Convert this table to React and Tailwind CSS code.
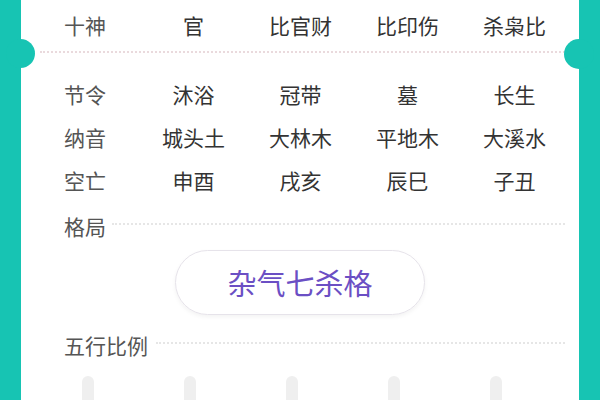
import React from 'react';

const rows = [
  ['节令', '沐浴', '冠带', '墓', '长生'],
  ['纳音', '城头土', '大林木', '平地木', '大溪水'],
  ['空亡', '申酉', '戌亥', '辰巳', '子丑'],
];

function Row({ cells, h }) {
  return (
    <div className={`grid grid-cols-[76px_107px_107px_107px_107px] items-center ${h}`}>
      <div className="text-[#555] text-left">{cells[0]}</div>
      {cells.slice(1).map((c, i) => (
        <div key={i} className="text-center text-[#333]">{c}</div>
      ))}
    </div>
  );
}

export default function App() {
  return (
    <div
      className="w-[600px] h-[400px] overflow-hidden bg-[#17c4b3] px-[21px] text-[21px] leading-none"
      style={{ fontFamily: '"Noto Sans CJK SC", "Noto Sans", sans-serif' }}
    >
      <div className="relative h-full bg-white">
        {/* side notches */}
        <div className="absolute left-[-15px] top-[39px] w-[29px] h-[29px] rounded-full bg-[#17c4b3]" />
        <div className="absolute right-[-15px] top-[39px] w-[30px] h-[30px] rounded-full bg-[#17c4b3]" />

        <div className="pl-[43px]">
          <Row cells={['十神', '官', '比官财', '比印伤', '杀枭比']} h="h-[51px]" />
        </div>
        <div className="ml-[19px] mr-[14px] border-t-2 border-dotted border-[#eadadd]" />

        <div className="pl-[43px] pt-[20px]">
          {rows.map((r, i) => (
            <Row key={i} cells={r} h="h-[43px]" />
          ))}

          <div className="flex items-center h-[48px] pr-[14px]">
            <span className="text-[#555]">格局</span>
            <div className="flex-1 ml-[6px] mt-[-4px] border-t-2 border-dotted border-[#e6e6e6]" />
          </div>

          <div className="flex justify-center pr-[14px] ml-[-43px] pl-[14px]">
            <div className="w-[250px] h-[65px] rounded-full border border-[#e6e3ea] shadow-[0_2px_4px_rgba(0,0,0,0.05)] flex items-center justify-center text-[29px] text-[#6b4fc4]">
              杂气七杀格
            </div>
          </div>

          <div className="flex items-center h-[60px] pr-[14px]">
            <span className="text-[#555]">五行比例</span>
            <div className="flex-1 ml-[8px] mt-[-4px] border-t-2 border-dotted border-[#e6e6e6]" />
          </div>

          <div className="flex ml-[18px] mt-[1px] gap-[90px]">
            {[0, 1, 2, 3, 4].map((i) => (
              <div key={i} className="w-[12px] h-[40px] rounded-t-[6px] bg-[#efefef]" />
            ))}
          </div>
        </div>
      </div>
    </div>
  );
}
